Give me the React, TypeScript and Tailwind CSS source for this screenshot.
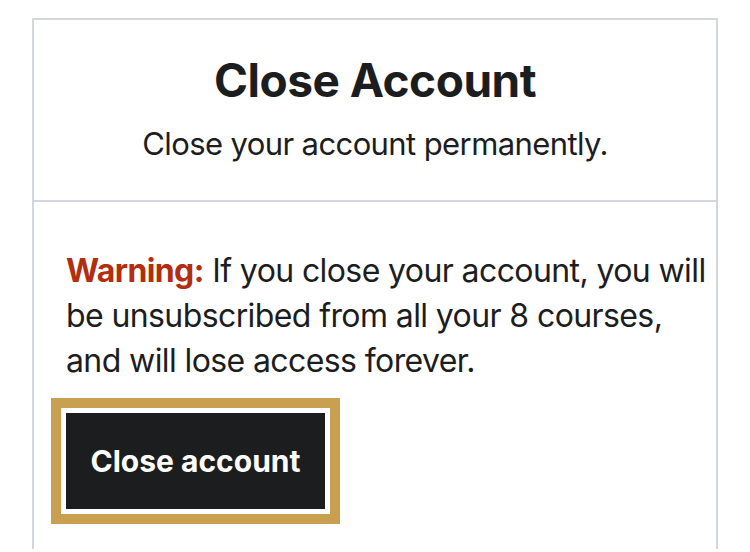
export default function App() {
	return (
		<div
			className="min-h-[552px] bg-white pt-[18px] pl-[32px] text-[#1c1d1f]"
			style={{ fontFamily: "Inter, 'Liberation Sans', sans-serif" }}
		>
			<div className="w-[686px] border-2 border-b-0 border-[#d1d7dc]">
				<div className="flex flex-col items-center border-b-2 border-[#d1d7dc] pt-[32px] pb-[38px]">
					<h1 className="text-[46px] leading-[56px] font-bold tracking-[-0.5px]">
						Close Account
					</h1>
					<p className="mt-[18px] text-[31px] leading-[36px] tracking-[-0.6px]">
						Close your account permanently.
					</p>
				</div>
				<div className="pt-[46px] pr-[2px] pb-[40px] pl-[32px]">
					<p className="text-[32px] leading-[45px] tracking-[-0.6px]">
						<span className="font-bold text-[#b32d0f]">Warning:</span> If you close
						your account, you will be unsubscribed from all your 8 courses, and will
						lose access forever.
					</p>
					<button
						type="button"
						className="mt-[30px] h-[96px] w-[259px] bg-[#1c1d1f] text-[30px] font-bold text-white ring-[10px] ring-[#c8a04f] ring-offset-[5px] ring-offset-white"
					>
						Close account
					</button>
				</div>
			</div>
		</div>
	);
}
